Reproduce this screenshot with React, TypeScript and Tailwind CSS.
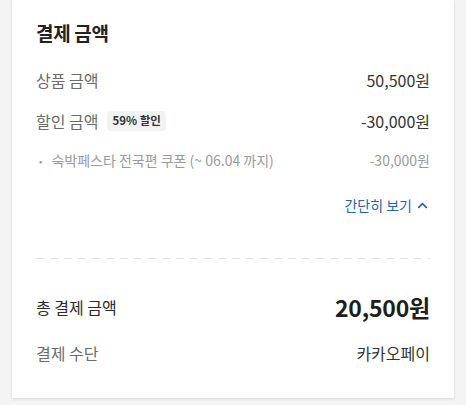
import React from "react";
import { ChevronUp } from "lucide-react";

export default function App() {
  return (
    <div
      className="w-[466px] h-[405px] bg-[#f4f4f4] overflow-hidden"
      style={{ fontFamily: '"Noto Sans CJK KR", "Noto Sans", sans-serif' }}
    >
      <div className="ml-3 w-[442px] bg-white shadow-[0_1px_3px_rgba(0,0,0,0.12)] px-6 pb-[33px] flex flex-col">
        <div className="mt-[21px] h-6 flex items-center text-[19px] font-bold text-[#222] tracking-[-0.3px]">
          결제 금액
        </div>

        <div className="mt-[23px] h-6 flex items-center justify-between">
          <span className="text-[16px] text-[#6b6b6b]">상품 금액</span>
          <span className="text-[16px] text-[#333]">50,500원</span>
        </div>

        <div className="mt-[17px] h-6 flex items-center justify-between">
          <div className="flex items-center gap-[9px]">
            <span className="text-[16px] text-[#6b6b6b]">할인 금액</span>
            <span className="h-5 px-[5px] rounded bg-[#f2f2f2] text-[11.5px] font-bold text-[#333] flex items-center">
              59% 할인
            </span>
          </div>
          <span className="text-[16px] text-[#333]">-30,000원</span>
        </div>

        <div className="mt-[17px] h-5 flex items-center justify-between text-[14px] text-[#9a9a9a]">
          <div className="flex items-center">
            <span className="ml-[3px] mr-[9px] text-[10px]">•</span>
            <span>숙박페스타 전국편 쿠폰 (~ 06.04 까지)</span>
          </div>
          <span>-30,000원</span>
        </div>

        <div className="mt-[25px] h-5 flex items-center justify-end gap-[3px] text-[14px] text-[#2a5fae]">
          <span>간단히 보기</span>
          <ChevronUp size={15} strokeWidth={2.6} />
        </div>

        <div className="mt-[43px] h-px bg-[linear-gradient(to_right,#e2e2e2_8px,transparent_8px)] bg-[length:14px_1px] bg-repeat-x" />

        <div className="mt-[32px] h-8 flex items-center justify-between">
          <span className="text-[16px] text-[#2a2a2a]">총 결제 금액</span>
          <span className="text-[23px] font-bold text-[#1e1e1e] tracking-[-0.2px]">20,500원</span>
        </div>

        <div className="mt-[18px] h-6 flex items-center justify-between">
          <span className="text-[16px] text-[#6b6b6b]">결제 수단</span>
          <span className="text-[16px] text-[#333]">카카오페이</span>
        </div>
      </div>
    </div>
  );
}
